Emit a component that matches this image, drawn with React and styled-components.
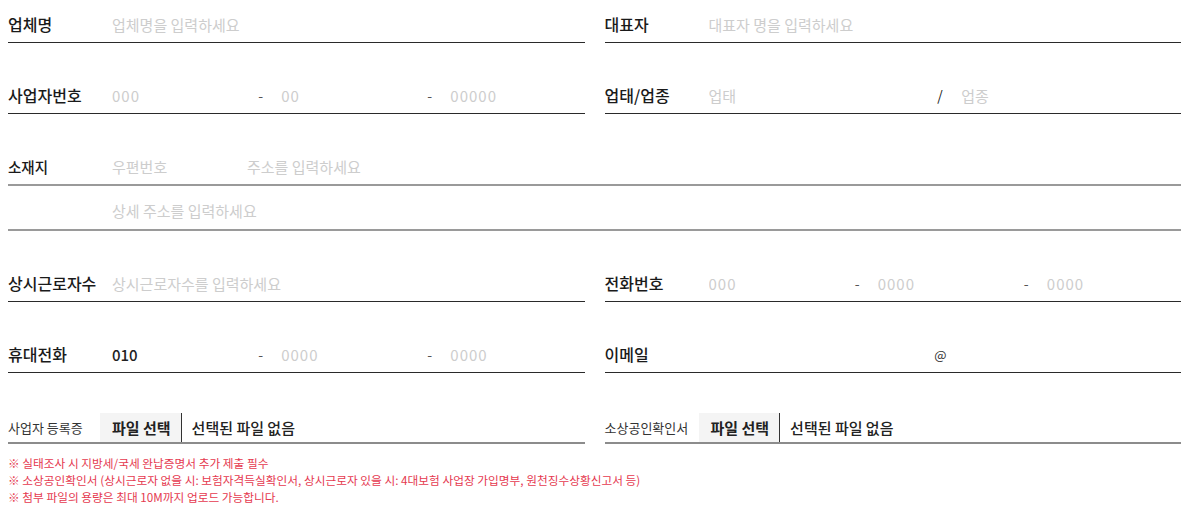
import React from "react";
import styled, { createGlobalStyle } from "styled-components";

const GlobalStyle = createGlobalStyle`
  html, body { background: #fff; }
  body {
    margin: 8px;
    font-family: "Noto Sans CJK KR", "Noto Sans", sans-serif;
    color: #222;
  }
  * { box-sizing: border-box; }
`;

const Form = styled.form`
  display: grid;
  grid-template-columns: minmax(0, 1fr) minmax(0, 1fr);
  column-gap: 20px;
  row-gap: 36px;
`;

const Field = styled.div`
  display: flex;
  align-items: center;
  min-width: 0;
  height: ${(p) => p.$h || 35}px;
  padding-top: ${(p) => p.$pt || 0}px;
  padding-bottom: 2px;
  border-bottom: ${(p) => (p.$soft ? "2px solid #9a9a9a" : "1px solid #2a2a2a")};
`;

const AddressBlock = styled.div`
  grid-column: 1 / -1;
  display: flex;
  flex-direction: column;
`;

const Label = styled.label`
  flex: none;
  width: 104px;
  font-size: ${(p) => p.$size || 16}px;
  font-weight: 500;
  color: #1a1a1a;
  white-space: nowrap;
`;

const Input = styled.input`
  flex: ${(p) => (p.$w ? "none" : "1 1 0")};
  width: ${(p) => (p.$w ? `${p.$w}px` : "0")};
  min-width: 0;
  border: none;
  outline: none;
  background: transparent;
  padding: 0;
  font-family: inherit;
  font-size: 15px;
  font-weight: ${(p) => (p.$strong ? 500 : 400)};
  letter-spacing: ${(p) => (p.$num ? "1px" : "0")};
  color: #222;
  &::placeholder {
    color: #cdcdcd;
  }
`;

const Sep = styled.span`
  flex: none;
  width: ${(p) => p.$w}px;
  padding-left: ${(p) => p.$off}px;
  font-size: ${(p) => p.$size || 14}px;
  color: ${(p) => p.$color || "#555"};
`;

const FileField = styled.div`
  display: flex;
  align-items: stretch;
  min-width: 0;
  height: 35px;
  padding-top: 4px;
  border-bottom: 2px solid #8c8c8c;
`;

const FileLabel = styled.span`
  flex: none;
  width: ${(p) => p.$w}px;
  display: flex;
  align-items: center;
  font-size: 13px;
  color: #333;
`;

const FileButton = styled.button`
  flex: none;
  border: none;
  border-right: 1px solid #333;
  background: #f4f4f4;
  padding: 0 10px 0 12px;
  font-family: inherit;
  font-size: 15px;
  font-weight: 700;
  color: #222;
`;

const FileName = styled.span`
  display: flex;
  align-items: center;
  padding-left: 10px;
  font-size: 15px;
  font-weight: 500;
  color: #222;
`;

const Notes = styled.ul`
  list-style: none;
  margin: 10px 0 0;
  padding: 0;
  font-size: 11.7px;
  line-height: 17px;
  color: #e5394f;
`;

export default function App() {
  return (
    <>
      <GlobalStyle />
      <Form onSubmit={(e) => e.preventDefault()}>
        <Field>
          <Label>업체명</Label>
          <Input placeholder="업체명을 입력하세요" />
        </Field>
        <Field>
          <Label>대표자</Label>
          <Input placeholder="대표자 명을 입력하세요" />
        </Field>

        <Field>
          <Label>사업자번호</Label>
          <Input $num placeholder="000" />
          <Sep $w={35} $off={12}>-</Sep>
          <Input $num placeholder="00" />
          <Sep $w={35} $off={12}>-</Sep>
          <Input $num placeholder="00000" />
        </Field>
        <Field>
          <Label>업태/업종</Label>
          <Input placeholder="업태" />
          <Sep $w={33} $off={9} $color="#222">/</Sep>
          <Input placeholder="업종" />
        </Field>

        <AddressBlock>
          <Field $soft $h={36}>
            <Label $size={14.5}>소재지</Label>
            <Input $w={135} placeholder="우편번호" />
            <Input placeholder="주소를 입력하세요" />
          </Field>
          <Field $soft $h={45} $pt={8}>
            <Label />
            <Input placeholder="상세 주소를 입력하세요" />
          </Field>
        </AddressBlock>

        <Field>
          <Label>상시근로자수</Label>
          <Input placeholder="상시근로자수를 입력하세요" />
        </Field>
        <Field>
          <Label>전화번호</Label>
          <Input $num placeholder="000" />
          <Sep $w={35} $off={12}>-</Sep>
          <Input $num placeholder="0000" />
          <Sep $w={35} $off={12}>-</Sep>
          <Input $num placeholder="0000" />
        </Field>

        <Field>
          <Label>휴대전화</Label>
          <Input $strong defaultValue="010" />
          <Sep $w={35} $off={12}>-</Sep>
          <Input $num placeholder="0000" />
          <Sep $w={35} $off={12}>-</Sep>
          <Input $num placeholder="0000" />
        </Field>
        <Field>
          <Label>이메일</Label>
          <Input />
          <Sep $w={33} $off={6} $size={13} $color="#333">@</Sep>
          <Input />
        </Field>

        <FileField>
          <FileLabel $w={92}>사업자 등록증</FileLabel>
          <FileButton type="button">파일 선택</FileButton>
          <FileName>선택된 파일 없음</FileName>
        </FileField>
        <FileField>
          <FileLabel $w={94}>소상공인확인서</FileLabel>
          <FileButton type="button">파일 선택</FileButton>
          <FileName>선택된 파일 없음</FileName>
        </FileField>
      </Form>
      <Notes>
        <li>※ 실태조사 시 지방세/국세 완납증명서 추가 제출 필수</li>
        <li>
          ※ 소상공인확인서 (상시근로자 없을 시: 보험자격득실확인서, 상시근로자 있을 시: 4대보험 사업장 가입명부, 원천징수상황신고서 등)
        </li>
        <li>※ 첨부 파일의 용량은 최대 10M까지 업로드 가능합니다.</li>
      </Notes>
    </>
  );
}
